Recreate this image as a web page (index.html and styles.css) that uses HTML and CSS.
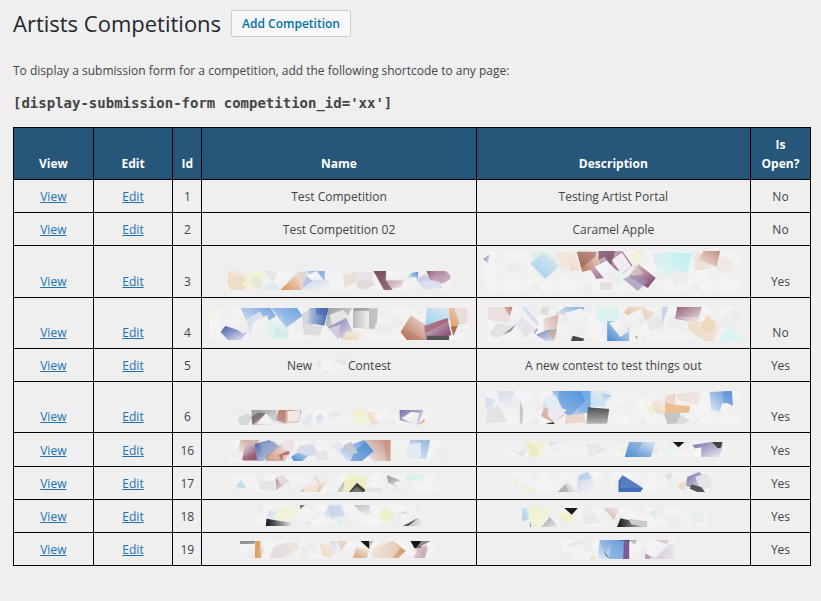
FILE: index.html
```html
<!DOCTYPE html>
<html lang="en">
<head>
<meta charset="utf-8">
<title>Artists Competitions</title>
<link rel="stylesheet" href="styles.css">
</head>
<body>
<svg class="defs" aria-hidden="true">
<defs>
<linearGradient id="blue" x1="0" y1="1" x2="1" y2="0"><stop offset="0" stop-color="#4388d0"/><stop offset="1" stop-color="#dfe7f2"/></linearGradient>
<linearGradient id="blue2" x1="1" y1="0" x2="0" y2="1"><stop offset="0" stop-color="#548fd6"/><stop offset="1" stop-color="#e6ecf5"/></linearGradient>
<linearGradient id="navy" x1="0" y1="0" x2="1" y2="1"><stop offset="0" stop-color="#405caa"/><stop offset="1" stop-color="#e6eaf2"/></linearGradient>
<linearGradient id="navy2" x1="1" y1="0" x2="0" y2="0"><stop offset="0" stop-color="#4565b0"/><stop offset="1" stop-color="#b9c6df"/></linearGradient>
<linearGradient id="sky" x1="0" y1="1" x2="1" y2="0"><stop offset="0" stop-color="#9dcff3"/><stop offset="1" stop-color="#e0ebea"/></linearGradient>
<linearGradient id="cyan" x1="1" y1="0" x2="0" y2="1"><stop offset="0" stop-color="#bdeff0"/><stop offset="1" stop-color="#e8f3f2"/></linearGradient>
<linearGradient id="plum" x1="1" y1="1" x2="0" y2="0"><stop offset="0" stop-color="#7b3862"/><stop offset="1" stop-color="#e2d8e0"/></linearGradient>
<linearGradient id="plum2" x1="0" y1="0" x2="1" y2="1"><stop offset="0" stop-color="#946079"/><stop offset="1" stop-color="#f0eaed"/></linearGradient>
<linearGradient id="rust" x1="0" y1="1" x2="1" y2="0"><stop offset="0" stop-color="#b96a4b"/><stop offset="1" stop-color="#ede2df"/></linearGradient>
<linearGradient id="rust2" x1="1" y1="0" x2="0" y2="1"><stop offset="0" stop-color="#b97560"/><stop offset="1" stop-color="#f0e9e6"/></linearGradient>
<linearGradient id="orange" x1="0" y1="1" x2="1" y2="0"><stop offset="0" stop-color="#da935c"/><stop offset="1" stop-color="#f1e6dd"/></linearGradient>
<linearGradient id="orange2" x1="1" y1="0" x2="0" y2="0"><stop offset="0" stop-color="#d29566"/><stop offset="1" stop-color="#f0e8e3"/></linearGradient>
<linearGradient id="yellow" x1="0" y1="0" x2="1" y2="1"><stop offset="0" stop-color="#f2f2c9"/><stop offset="1" stop-color="#f1f1e8"/></linearGradient>
<linearGradient id="black" x1="0" y1="0" x2="1" y2="0"><stop offset="0" stop-color="#111"/><stop offset="1" stop-color="#ddd"/></linearGradient>
<linearGradient id="dark" x1="0" y1="1" x2="0" y2="0"><stop offset="0" stop-color="#b4b5b6"/><stop offset="1" stop-color="#4c4e51"/></linearGradient>
<linearGradient id="gray" x1="0" y1="0" x2="1" y2="1"><stop offset="0" stop-color="#97999b"/><stop offset="1" stop-color="#eee"/></linearGradient>
<linearGradient id="gray2" x1="0" y1="0" x2="1" y2="0"><stop offset="0" stop-color="#b9babc"/><stop offset="1" stop-color="#efefef"/></linearGradient>
<linearGradient id="purple" x1="0" y1="0" x2="1" y2="1"><stop offset="0" stop-color="#7a6fa9"/><stop offset="1" stop-color="#edebf1"/></linearGradient>
<linearGradient id="white" x1="0" y1="0" x2="1" y2="1"><stop offset="0" stop-color="#f8f8f9"/><stop offset="1" stop-color="#e9e9ec"/></linearGradient>
<linearGradient id="lilac" x1="0" y1="0" x2="1" y2="1"><stop offset="0" stop-color="#ced8ea"/><stop offset="1" stop-color="#f1f2f5"/></linearGradient>
<linearGradient id="peach" x1="0" y1="1" x2="1" y2="0"><stop offset="0" stop-color="#eed5ba"/><stop offset="1" stop-color="#f3eeea"/></linearGradient>
<linearGradient id="fadeL"><stop offset="0" stop-color="#efefef"/><stop offset="1" stop-color="#efefef" stop-opacity="0"/></linearGradient>
<linearGradient id="fadeR"><stop offset="0" stop-color="#efefef" stop-opacity="0"/><stop offset="1" stop-color="#efefef"/></linearGradient>
<pattern id="wash" width="160" height="110" patternUnits="userSpaceOnUse">
<path fill="#f2f2f2" d="M0 0h160v110H0z"/>
<path fill="#ededee" d="M0 20 30 5 48 38 18 52zM90 60l35-10 12 30-38 8z"/>
<path fill="#f4f4f5" d="M35 0 70 12 55 50 28 35zM100 0l40 8-12 38-38-10zM10 65l40-12 20 40-42 15z"/>
<path fill="#efeff0" d="M70 25l25 8-12 30-28-10zM125 70l35-8v40l-30 4zM60 80l28-6 8 32H66z"/>
</pattern>
</defs>
</svg>

<main class="wrap">
<header class="heading">
<h1>Artists Competitions</h1>
<a class="action" href="#add">Add Competition</a>
</header>
<p class="intro">To display a submission form for a competition, add the following shortcode to any page:</p>
<pre class="shortcode">[display-submission-form competition_id='xx']</pre>

<table class="list">
<colgroup><col class="c-link"><col class="c-link"><col class="c-id"><col><col><col class="c-open"></colgroup>
<thead>
<tr><th scope="col">View</th><th scope="col">Edit</th><th scope="col">Id</th><th scope="col">Name</th><th scope="col">Description</th><th scope="col">Is Open?</th></tr>
</thead>
<tbody>
<tr><td><a href="#v1">View</a></td><td><a href="#e1">Edit</a></td><td>1</td><td>Test Competition</td><td>Testing Artist Portal</td><td>No</td></tr>
<tr><td><a href="#v2">View</a></td><td><a href="#e2">Edit</a></td><td>2</td><td>Test Competition 02</td><td>Caramel Apple</td><td>No</td></tr>
<tr><td><a href="#v3">View</a></td><td><a href="#e3">Edit</a></td><td>3</td>
<td class="pic"><svg class="art h51" viewBox="6 3 822 153"><svg x="84" y="78" width="669" height="57" viewBox="84 78 669 57">
<path fill="url(#wash)" d="M84 78h669v57H84z"/>
<path fill="url(#peach)" d="M84 78h60l-5 57H92l-8-20z"/><path fill="#efdfc8" d="M88 106 110 92l38 8-10 35H92z"/>
<path fill="url(#yellow)" d="M146 84l38-6 20 18-15 38-62-12z"/><path fill="#e5e8d8" d="M150 100l24-8 14 34-22 6z"/>
<path fill="#dfecef" d="M205 110l28 6 6 19h-52z"/><path fill="#e3e9e7" d="M190 78h38l12 22-22 12z"/>
<path fill="url(#white)" d="M236 78h56l-48 57-20-28z"/><path fill="url(#orange)" d="M292 84 242 135h65z"/>
<path fill="#dcd5d2" d="M293 80h28v16l-15 34z"/><path fill="#b8c4e0" d="M322 90 307 128l60-14z"/><path fill="url(#blue2)" opacity=".75" d="M320 78h55v28l-18 20z"/>
<path fill="url(#white)" d="M320 92l30-14 25 30-16 16z"/><path fill="url(#lilac)" d="M307 130l35-26 48 2v29h-83z"/><path fill="#f2f3f5" d="M388 78h40v57h-40z"/>
<path fill="#eee0d7" d="M430 90l34-9 16 24-45 26z"/><path fill="#e2dad6" d="M474 108l40-8 14 20-36 14-22-8z"/><path fill="#e6e4e6" d="M462 80l60 2-3 20-50 8z"/>
<path fill="url(#plum2)" d="M522 78h38l2 28h50l-5 20-52 9z"/><path fill="#6f4751" opacity=".7" d="M522 78h38l-3 26 22 31h-26z"/>
<path fill="url(#white)" d="M560 78h50l25 14-15 14h-60z"/><path fill="url(#blue2)" d="M636 84l20-4v24l-8-8-24 2z"/>
<path fill="#cbd2e6" d="M650 104l26-18 28 22-30 24z"/><path fill="#dcdfec" d="M660 112l52-8 18 24-55 7z"/><path fill="url(#plum2)" d="M753 90 735 78h-55l12 26 42 12 19-15z"/><path fill="#b48eac" opacity=".5" d="M700 78h40l13 13v12l-30 15z"/>
</svg></svg></td>
<td class="pic"><svg class="art h51" viewBox="6 3 819 153"><svg x="24" y="18" width="774" height="120" viewBox="24 18 774 120">
<path fill="url(#wash)" d="M24 18h774v120H24z"/>
<path fill="url(#purple)" d="M24 42l18-13-4 27z"/><path fill="#ecf0e7" d="M176 80l28 10 12 10-38-4z"/><path fill="#dcefe9" d="M170 22l50-3 25 30-64 8z"/>
<path fill="url(#sky)" d="M204 24l50 38-43 40-46-46z"/><path fill="#f1e6da" d="M240 22l60-2 10 28-50 22z"/><path fill="url(#peach)" d="M285 48h28l4 29h-32z"/>
<path fill="url(#rust)" d="M305 20h65l3 50-52 10z"/><path fill="#905a4c" opacity=".55" d="M305 20h60l-5 15-41 35z"/>
<path fill="url(#plum)" d="M370 18h72l30 44-38 30-70 10-18-28 27-18z"/><path fill="#724758" opacity=".7" d="M370 18h50l-12 42-20-25-18 10z"/>
<path fill="url(#white)" d="M358 65l36-18 44 42-38 28z"/><path fill="#f3ecf0" d="M410 45l30-22 30 42-32 22z"/><path fill="url(#yellow)" d="M465 28l30-10 10 28-32 14z"/>
<path fill="#e5e0dc" d="M375 112h36v22h-38z"/><path fill="#e7f0ef" d="M418 72l36 18-20 34-24-5z"/>
<path fill="url(#plum)" d="M490 57l52 42-24 30-58-34z"/><path fill="#9d91b8" opacity=".7" d="M470 90l48 18-30 30-44-36z"/><path fill="#d8cdbb" opacity=".7" d="M480 58l26 30-38 4z"/>
<path fill="#dceced" d="M533 25l70-5-6 48-54 2z"/><path fill="url(#cyan)" d="M582 22l68 3-13 65-35-15-40 26-20-34z"/>
<path fill="#eee2dc" d="M660 28l38-10 10 52-50 8z"/><path fill="url(#rust2)" opacity=".8" d="M685 18h50l-10 48-55-22z"/><path fill="#f0e8e3" d="M740 30l34 18-16 38-36-10z"/><path fill="#ececec" d="M585 90l38-8 14 25-40 20zM533 118l20 4-5 14-20-3z"/>
</svg></svg></td><td>Yes</td></tr>
<tr><td><a href="#v4">View</a></td><td><a href="#e4">Edit</a></td><td>4</td>
<td class="pic"><svg class="art h50" viewBox="6 0 822 150"><svg x="28" y="30" width="776" height="96" viewBox="28 30 776 96">
<path fill="url(#wash)" d="M28 30h776v96H28z"/><path fill="#f4f4e6" d="M28 30h22l-8 34-14 4z"/>
<path fill="url(#navy)" d="M76 84l66 20-20 22H84l-22-24z"/><path fill="url(#white)" d="M72 66l40-5 45 32-28 14z"/>
<path fill="url(#blue2)" opacity=".8" d="M122 30h90l16 25-70 44-24-42z"/><path fill="url(#lilac)" d="M140 64l40-24 28 45-58 28z"/><path fill="url(#white)" d="M160 75l42-24 10 45-64 30z"/>
<path fill="#e1f1ef" d="M206 65l62 15-5 45h-65z"/><path fill="#cdeae8" opacity=".6" d="M225 84l42 18v22l-42-4z"/><path fill="url(#blue2)" d="M214 30h78l16 24-50 35z"/><path fill="#8eb7e7" opacity=".5" d="M240 30h52l15 24-48 34z"/>
<path fill="#d5d7df" d="M306 48l26-18 20 44-40 30z"/><path fill="url(#navy2)" d="M330 30h56l-12 53-50-8z"/><path fill="#3e66ae" opacity=".6" d="M348 30h39l-3 20h-34z"/><path fill="url(#gray)" d="M386 30h72l-14 28-54 34-12-10z"/><path fill="#e4e5e6" d="M390 50l40-15 20 24-50 34z"/>
<path fill="#dddde0" d="M315 80l55 5-10 28-48-3z"/><path fill="url(#purple)" d="M385 88l54-28 22 42-32 24z"/><path fill="#d3c9dc" d="M386 90l36-10-5 46z"/><path fill="url(#peach)" d="M440 100l52 4-20 22h-46z"/>
<path fill="url(#gray2)" d="M462 30h74l-6 66-70-8z"/><path fill="#848586" opacity=".6" d="M462 30h46v12h-48z"/><path fill="#aaa" opacity=".6" d="M509 32l26-2-4 65-25-5z"/><path fill="url(#gray2)" d="M460 38h48v52h-48z"/>
<path fill="#ecebef" d="M530 75l55 10-24 25-40-8z"/><path fill="url(#rust)" d="M634 52l48 30v44h-60l-19-24z"/><path fill="#ae7562" opacity=".4" d="M610 94l65 28v4h-52z"/><path fill="url(#sky)" d="M682 30h62l14 35-80 20z"/>
<path fill="url(#plum)" d="M744 60l12 52-78 14-6-42z"/><path fill="#96404f" opacity=".5" d="M674 84l70-24 2 10-68 35z"/><path fill="url(#orange)" d="M747 30h57v42l-48 14z"/><path fill="#e9ddd5" d="M766 30h38v42l-24 6z"/><path fill="#aa6f4d" d="M754 86l22-4-14 32z"/><path fill="#555" d="M684 113h65v13h-67z"/>
</svg></svg></td>
<td class="pic"><svg class="art h50" viewBox="6 0 819 150"><svg x="37" y="27" width="761" height="102" viewBox="37 27 761 102">
<path fill="url(#wash)" d="M37 27h761v102H37z"/><path fill="#ecdfe0" d="M37 27h52l14 48-66-10z"/><path fill="url(#rust2)" d="M86 27h26l-8 32z"/><path fill="url(#white)" d="M112 30l26-3 14 45-55 15z"/><path fill="#e2e2e2" d="M65 75l52 12-54 34-20-14z"/><path fill="#909090" d="M124 78l-42 33 24-10zM189 92l-12 18 4-18z"/>
<path fill="#e6e2e9" d="M140 60l46 34-38 25-22-42z"/><path fill="#d6dfef" d="M138 27h13l41 48-7 10z"/><path fill="#dedfd8" d="M198 27h24l-4 26-22-5z"/><path fill="url(#rust2)" d="M205 62l45-12-8 76-36-32z" opacity=".5"/>
<path fill="url(#navy)" opacity=".75" d="M183 110l32-14 30-2-12 35h-22z"/><path fill="#d1aa97" opacity=".7" d="M215 98h28l-8 31z"/><path fill="url(#blue2)" opacity=".7" d="M270 27h58l-14 26-78-3z"/><path fill="url(#white)" d="M270 45l48-14 22 38-38 20zM245 80l60-10 30 42-88 17z"/><path fill="#484848" d="M293 113l35 9-4 7h-37z"/>
<path fill="#daf3f1" d="M365 27h66v39l-48 8-20-12z"/><path fill="url(#blue)" d="M396 69h44l22 25v35h-66z"/><path fill="url(#white)" d="M402 75l38-13 20 38-24 18z"/><path fill="url(#orange)" opacity=".65" d="M458 27h48l36 20-46 30-50-34z"/><path fill="url(#white)" d="M460 50l38-18 14 36-30 12z"/>
<path fill="#e8e8ec" d="M512 62l44-10 10 38-40 8z"/><path fill="#c7d4ec" d="M560 27h20l-20 55z"/><path fill="#8c8e91" d="M480 112l8 6-4 5z"/><path fill="url(#plum2)" d="M606 27h74l-14 47-66-12z"/><path fill="#eee4e7" opacity=".5" d="M605 58h70l-9 16z"/><path fill="url(#peach)" d="M637 68l50 2 10-20 42 34-26 45h-24l-48-32z"/><path fill="#efd0b2" opacity=".6" d="M692 50l28 22-6 30-40-2z"/>
<path fill="#daf4f2" d="M760 86l38 30v13h-68z"/><path fill="#ebebee" d="M760 40l22-13 16 36-24 12z"/>
</svg></svg></td><td>No</td></tr>
<tr><td><a href="#v5">View</a></td><td><a href="#e5">Edit</a></td><td>5</td>
<td>New<svg class="patch" viewBox="339 24 99 45"><path fill="#f1f1f1" d="M339 24h99v45h-99z"/><path fill="#e5e5e6" d="M400 32l38-8v22l-15-3zM366 66l10-14 8 17zM345 40l22-12-5 30z"/><path fill="#f4f4f4" d="M360 35l32-8 8 32-35 4z"/></svg>Contest</td><td>A new contest to test things out</td><td>Yes</td></tr>
<tr><td><a href="#v6">View</a></td><td><a href="#e6">Edit</a></td><td>6</td>
<td class="pic"><svg class="art h50" viewBox="6 96 822 150"><svg x="102" y="180" width="608" height="45" viewBox="102 180 608 45">
<path fill="url(#wash)" d="M102 180h608v45H102z"/><path fill="#d6d8d9" d="M112 205l30-15 16 10-14 25h-26z"/><path fill="url(#gray)" d="M155 180h74l12 30-30 15h-55z"/><path fill="#6d5a60" opacity=".7" d="M155 200l20-13 25 3-42 35z"/><path fill="url(#white)" d="M172 222l26-33 34 36z"/>
<path fill="url(#rust2)" d="M234 180h70l-6 36-64 9z"/><path fill="#a55f54" opacity=".55" d="M238 180h18l2 40-30-10z"/><path fill="#f0e9e7" d="M262 184l40-4-4 34-32 2z"/><path fill="#e4e8ec" d="M320 195l20-8-6 38h-30z"/><path fill="url(#lilac)" d="M350 198l14-8 13 20-26 15z"/><path fill="#e4e8ef" d="M385 190l22-10 18 12-30 14z"/>
<path fill="url(#yellow)" d="M458 180h40l20 12-12 33h-38z"/><path fill="url(#peach)" d="M500 184l46 4-6 36-24 1z"/><path fill="url(#white)" d="M525 195l35-12 34 42h-52z"/><path fill="url(#purple)" d="M600 180h72l-15 45-56-14z"/><path fill="url(#white)" d="M606 205l30-20 24 4-10 36z"/><path fill="#d8a176" d="M674 207l3 8-22 10z"/><path fill="url(#fadeR)" d="M660 180h50v45h-50z"/>
</svg></svg></td>
<td class="pic"><svg class="art h50" viewBox="6 6 819 150"><svg x="30" y="33" width="768" height="99" viewBox="30 33 768 99">
<path fill="url(#wash)" d="M30 33h768v99H30z"/><path fill="url(#lilac)" d="M70 33h52l-20 48-30-14zM30 50l30 10-12 36-18-10z"/><path fill="#e4e4e6" d="M36 94l32-20 28 50-66 8z"/><path fill="#c6c6ca" d="M134 60l10 32-3 39-7-2z"/><path fill="url(#white)" d="M138 60l34-26 34 48-22 18z"/><path fill="#dee3ef" d="M205 60l46 12-26 32-24-12z"/>
<path fill="url(#blue2)" d="M232 33h114v62l-62 18-42-36z"/><path fill="#4990df" opacity=".5" d="M250 33h66l16 28-48 48-34-22z"/><path fill="#7cb3ea" opacity=".7" d="M318 33h28v62h-36l20-35z"/><path fill="#e3edf4" d="M205 55l36-10 20 39-40 5z"/>
<path fill="url(#rust)" opacity=".65" d="M207 82l64 22-35 24-38-20z"/><path fill="#eceaf0" d="M222 70l52 20-34 38-22-20z"/><path fill="#ecd6cc" d="M272 106l55-5 6 26-65 5z"/><path fill="#2b201e" d="M210 131l22-4 8 5z"/>
<path fill="url(#sky)" opacity=".6" d="M346 33h68l-26 48-42-2z"/><path fill="url(#blue2)" opacity=".5" d="M378 38l32 10-28 16z"/><path fill="url(#dark)" d="M338 82l64 5-6 44h-62z"/><path fill="url(#white)" d="M402 65l36-12 26 18-42 24z"/>
<path fill="#f0efd5" d="M506 82l42-12-16 38z"/><path fill="url(#peach)" d="M530 62h40l4 44-34-8z"/><path fill="#edbd8e" d="M570 66l34 10 40 2-2 20-72 1z"/><path fill="#f0d7cb" d="M572 46l44-10-14 36-34-7z"/><path fill="url(#white)" d="M602 36h60l18 8-10 30-70-4z"/><path fill="#eee4df" d="M604 40l70-5-6 38-62-14z"/>
<path fill="#c4c5c5" d="M566 100l48-4 4 34-42 2z"/><path fill="#dcdcde" d="M616 104l30 18-20 10h-24z"/><path fill="url(#blue2)" d="M703 36l67-3 3 44-22-10-8 30-34-6z"/><path fill="#5a8fd4" opacity=".4" d="M742 33h28l3 44-20-10-6 12z"/><path fill="#f6f6f6" d="M742 68l20 8-12 24-16-8z"/>
</svg></svg></td><td>Yes</td></tr>
<tr><td><a href="#v16">View</a></td><td><a href="#e16">Edit</a></td><td>16</td>
<td class="pic"><svg class="art h33" viewBox="6 9 822 99"><svg x="84" y="30" width="651" height="63" viewBox="84 30 651 63">
<path fill="url(#wash)" d="M84 30h651v63H84z"/><path fill="url(#rust2)" opacity=".7" d="M122 30h56l-20 34-46 5z"/><path fill="#d3b6a5" d="M128 30h48l-18 18z"/><path fill="url(#plum)" d="M136 42l30 6 10 42h-50z"/><path fill="#995b60" opacity=".5" d="M128 80l46-14 5 27h-48z"/><path fill="url(#navy)" d="M164 42l44-12 32 20-50 43h-18z"/><path fill="#9fa9c9" opacity=".6" d="M180 36l40-4 22 18-52 30z"/>
<path fill="url(#rust)" d="M198 78l50-40 20 24-12 31h-58z" opacity=".65"/><path fill="#b36160" opacity=".8" d="M236 76l34-16-2 14-18 2-4 17z"/><path fill="#ece3e6" d="M252 30h34l-10 36-28-10z"/>
<path fill="url(#blue)" d="M274 80l28-18 34 6-28 25h-26z"/><path fill="#d8dcea" d="M298 48l40-6 20 30-22 8-48-14z"/><path fill="#e9e4e3" d="M348 66l34-6 4 30-40 3z"/><path fill="#e8e6ea" d="M392 48l22-18 24 26-16 14z"/><path fill="url(#blue2)" d="M432 52l62-22 29 33-36 30h-46l-22-32z"/><path fill="#3c82cc" opacity=".5" d="M468 60l30-25 25 28-36 30h-35z"/><path fill="#c6c8d3" d="M432 46l22-10 22 34-32 2z"/>
<path fill="url(#rust2)" opacity=".8" d="M495 30h78v63h-52l-15-14 17-16z"/><path fill="#cb8c77" opacity=".5" d="M550 30h23v63h-12z"/><path fill="#f0f1ed" d="M574 32h44v58h-44z"/><path fill="url(#blue2)" opacity=".6" d="M632 30h60l-12 58-60-8z"/><path fill="#e2eaf5" d="M630 42l34-4v52l-42-10z"/><path fill="url(#white)" d="M700 30h35v63h-44z"/>
</svg></svg></td>
<td class="pic"><svg class="art h33" viewBox="6 159 819 99"><svg x="64" y="186" width="690" height="45" viewBox="64 186 690 45">
<path fill="url(#wash)" d="M64 186h690v45H64z"/><path fill="#e2e4ec" d="M84 196l44 22 26-14-10 27z"/><path fill="url(#yellow)" d="M150 186h68l-25 45h-28z"/><path fill="#eeeac2" d="M155 190l30 5 6 36h-26z"/><path fill="#e7dcdc" d="M218 186h34l-28 12z"/><path fill="#eae7ea" d="M330 192l40-6 22 28-48 17z"/><path fill="#f2efd4" d="M430 207l20-6-6 25z"/>
<path fill="url(#blue)" d="M462 186h80l-15 45h-78z"/><path fill="#6396d8" opacity=".4" d="M462 186h40l-15 30-38 14z"/><path fill="#f1e8e0" d="M532 212l16-10-4 27z"/><path fill="#e2f3f1" d="M570 204l26-8 8 20-26 15z"/><path fill="#141414" d="M593 186h35l-18 16z"/><path fill="url(#purple)" d="M652 195l54-9 38 10-12 35h-54z"/><path fill="#f8f8f8" d="M658 206l20-4v29h-20z"/><path fill="#444" d="M710 186h32l-5 17-9 2z"/>
<path fill="url(#fadeL)" d="M64 186h50v45H64z"/></svg></svg></td><td>Yes</td></tr>
<tr><td><a href="#v17">View</a></td><td><a href="#e17">Edit</a></td><td>17</td>
<td class="pic"><svg class="art h32" viewBox="6 111 822 96"><svg x="84" y="135" width="680" height="51" viewBox="84 135 680 51">
<path fill="url(#wash)" d="M84 135h680v51H84z"/><path fill="url(#sky)" d="M124 148l14 26-30-4z"/><path fill="#e3e4e6" d="M180 156l44-6v34l-46-4z"/><path fill="url(#plum2)" d="M228 145l30 15-30 22z" opacity=".7"/><path fill="#e3dae0" d="M228 140l22-5 20 20-26 10z"/><path fill="url(#white)" d="M290 140l44-5 6 40-74 3z"/>
<path fill="url(#orange)" opacity=".6" d="M342 140l14-5 4 24 22-4-22 31h-60l22-18 34-5z"/><path fill="#f2e3d9" d="M320 166l40-3-10 22-40 1z"/><path fill="#eee" d="M360 135h28l-6 25-20-6z"/><path fill="url(#gray)" d="M456 152l-26 34h-18l20-30z"/><path fill="url(#yellow)" d="M440 135h54l8 36-22 15h-50z"/><path fill="#ebebb4" opacity=".6" d="M435 150l64-6 2 42h-72z"/><path fill="#42423b" d="M472 158l26 22v6h-50z"/><path fill="#8c8c70" opacity=".7" d="M472 170l20 16h-40z"/>
<path fill="#e4e4e4" d="M500 172l54 2-12 12h-48z"/><path fill="url(#gray)" d="M562 135l52 20-2 31-30-22-16-6z"/><path fill="url(#white)" d="M582 160l32-12-4 38z"/><path fill="#d6f2ef" d="M622 135h60l-26 15h-36z"/><path fill="#e6efed" d="M710 135h20l-5 18zM614 150l24 6-5 22z"/><path fill="url(#fadeL)" d="M84 135h40v51H84z"/><path fill="url(#fadeR)" d="M704 135h60v51h-60z"/>
</svg></svg></td>
<td class="pic"><svg class="art h32" viewBox="6 15 819 96"><svg x="114" y="30" width="622" height="60" viewBox="114 30 622 60">
<path fill="url(#wash)" d="M114 30h622v60H114z"/><path fill="#f0f0d6" d="M150 66l38 16-10 8h-32zM114 50l14-5-5 25z"/><path fill="url(#gray2)" d="M274 63l36 27h-62z"/><path fill="#999" opacity=".5" d="M270 68l-22 22h35z"/><path fill="url(#lilac)" d="M306 48l32-18 24 36-10 20-46 4z"/><path fill="#bed3ee" d="M310 40l28-10 10 20-36 8z"/><path fill="url(#white)" d="M348 30h40l-20 32zM358 68l36-14 10 26-40 10z"/>
<path fill="#416db8" d="M442 40l62 38-8 12h-66V57z"/><path fill="#7094cc" opacity=".45" d="M442 40l62 38h-70z"/><path fill="url(#white)" d="M454 34l46-4 3 48-52-36z"/><path fill="#e2e2e2" d="M570 38l18-8 5 15-15 10z"/><path fill="#eed9cc" d="M610 64l20-6v26l-20-4z"/><path fill="url(#purple)" d="M636 45l36-15 24 20-12 38-52-16z"/><path fill="#e4e4ec" d="M660 45l36-13 18 38-36 16z"/><path fill="#555" d="M648 67l30 8 12 15h-24l-22-10z"/><path fill="url(#fadeR)" d="M700 30h36v60h-36z"/>
</svg></svg></td><td>Yes</td></tr>
<tr><td><a href="#v18">View</a></td><td><a href="#e18">Edit</a></td><td>18</td>
<td class="pic"><svg class="art h32" viewBox="6 6 822 96"><svg x="171" y="21" width="501" height="63" viewBox="171 21 501 63">
<path fill="url(#wash)" d="M171 21h501v63H171z"/><path fill="url(#lilac)" d="M208 36l26 8-8 28-26-8z"/><path fill="url(#yellow)" d="M238 34l60-13-4 36-42 12-28-10z"/><path fill="url(#black)" d="M200 62l74 12-4 10h-72z"/><path fill="#7b7f82" d="M300 21h16l-14 13z"/><path fill="url(#white)" d="M316 28l60 15-34 24-44-12z"/><path fill="#d9ecf0" d="M318 68l20 6-15 10zM410 67l28 4-20 13z"/>
<path fill="url(#lilac)" d="M388 21h40l14 34-35 12-35-14z"/><path fill="#b3c9eb" opacity=".5" d="M384 28l34-5 18 30-42 5z"/><path fill="url(#gray)" opacity=".6" d="M512 21h-48l15 18 30 11z"/><path fill="#f0f0c7" d="M550 27l34 18-22 32-22-18z"/><path fill="#dfd5d9" d="M590 45l35-5-5 9z"/><path fill="url(#white)" d="M605 52l48-14-10 30-38 12z"/><path fill="#555" d="M656 60l-46 24h40z"/><path fill="url(#gray2)" d="M656 60l16 10v14h-46z"/>
</svg></svg></td>
<td class="pic"><svg class="art h32" viewBox="6 114 819 96"><svg x="141" y="138" width="554" height="57" viewBox="141 138 554 57">
<path fill="url(#wash)" d="M141 138h554v57H141z"/><path fill="url(#sky)" d="M141 138h20v34l-20 6z"/><path fill="#7a9eac" d="M164 176l6 19h-6z"/><path fill="url(#yellow)" d="M162 138h70l-22 36-8 21h-34z"/><path fill="#f2f2c2" d="M242 150l52 10-14 24z"/><path fill="url(#gray)" d="M224 165l26 30h-52z"/><path fill="#191917" d="M267 138h41l-18 20z"/><path fill="#e9e9ea" d="M320 160l36-12 22 34-50 4z"/><path fill="url(#rust)" opacity=".5" d="M386 138h47l-16 36z"/>
<path fill="url(#black)" d="M436 169l80 18v8h-90z"/><path fill="#c8cdd0" d="M460 170l56 8v17l-48-8z"/><path fill="#dfebec" d="M520 150l32-12-12 38zM646 152l34-8 10 34-40 3z"/><path fill="url(#fadeR)" d="M560 138h135v57H560z" opacity=".6"/>
</svg></svg></td><td>Yes</td></tr>
<tr><td><a href="#v19">View</a></td><td><a href="#e19">Edit</a></td><td>19</td>
<td class="pic"><svg class="art h32" viewBox="6 105 822 96"><svg x="120" y="129" width="615" height="51" viewBox="120 129 615 51">
<path fill="url(#wash)" d="M120 129h615v51H120z"/><path fill="#8b9291" d="M120 129h46l-2 8-44 1z"/><path fill="url(#white)" d="M120 146l45-8v42h-45z"/><path fill="#dda160" d="M166 129h15l2 51h-18z"/><path fill="url(#orange)" opacity=".6" d="M178 145l16 8-12 27h-10z"/><path fill="#e4dede" d="M220 148l40-15 22 26-36 21h-38z"/><path fill="#eee3de" d="M262 136l30-7 6 28-28 3z"/><path fill="#e7eff0" d="M302 148l26-10v42h-28z"/>
<path fill="url(#peach)" d="M358 135l30 4 24 25-22 16-22-8z"/><path fill="url(#lilac)" d="M390 129h20l6 38-14-5z"/><path fill="#e8d6cc" d="M410 129h35l-20 30z"/><path fill="url(#white)" d="M440 150l22-18 40 28-30 20h-42z"/><path fill="url(#orange)" opacity=".8" d="M470 150l40 6-8 24h-42z"/><path fill="#191715" d="M483 129h26v24z"/><path fill="#b8aea6" d="M509 129h12l-12 20z"/><path fill="url(#orange2)" d="M580 129l39 30-23 21h-84l8-26z"/><path fill="#efe3dc" d="M540 129h38l24 20-24 31h-46l-12-24z" opacity=".6"/>
<path fill="url(#plum)" opacity=".45" d="M660 142l26 6-10 32h-34z"/><path fill="#151515" d="M633 129h34l-4 20-18 2z"/><path fill="#878787" d="M666 129h28l-46 23z"/><path fill="#d9a0a0" opacity=".5" d="M642 154l40-16-6 34z"/><path fill="#f4f4f4" d="M690 140l20 8-14 20z"/><path fill="url(#fadeR)" d="M685 129h50v51h-50z"/>
</svg></svg></td>
<td class="pic"><svg class="art h32" viewBox="6 213 819 96"><svg x="261" y="234" width="339" height="57" viewBox="261 234 339 57">
<path fill="url(#wash)" d="M261 234h339v57H261z"/><path fill="#e8e8e9" d="M275 246l40-12 14 10-44 14z"/><path fill="url(#peach)" d="M354 276l12 15h-22z"/><path fill="url(#blue2)" d="M374 234h78l-4 57h-82z"/><path fill="#72a8df" opacity=".6" d="M410 240l38-4v55h-46z"/><path fill="#7fa9dc" opacity=".35" d="M374 240l36-6-20 40z"/><path fill="#777a89" d="M386 268l18 20-12-6z"/><path fill="#7f579a" d="M446 240l16-6v57h-18z"/><path fill="#574a67" d="M428 234h36v5z"/>
<path fill="#bbb" d="M462 234h24l-8 14z"/><path fill="url(#white)" d="M466 250l38-12 8 50-46 3z"/><path fill="#c096c0" d="M510 274l30 17h-30z"/><path fill="#dfd3e1" d="M556 244l44 6v41h-78z"/><path fill="url(#white)" d="M536 248l45-10-3 14-38 36-22-12z"/><path fill="#ddc3d3" d="M540 234h42l-6 12z"/><path fill="url(#fadeR)" d="M560 234h40v57h-40z" opacity=".7"/>
</svg></svg></td><td>Yes</td></tr>
</tbody>
</table>
</main>
</body>
</html>
```
FILE: styles.css
```css
* { box-sizing: border-box; }

body {
  margin: 0;
  background: #efefef;
  color: #444;
  font: 12px/19px "Open Sans", "Noto Sans", sans-serif;
}

.defs { position: absolute; width: 0; height: 0; }

.wrap { padding: 10px 10px 32px 13px; }

.heading { display: flex; align-items: center; gap: 10px; }

h1 {
  margin: 0;
  color: #23282d;
  font-size: 22px;
  font-weight: 400;
  line-height: 27px;
}

.action {
  padding: 4px 10px;
  border: 1px solid #ccc;
  border-radius: 2px;
  background: #f7f7f7;
  color: #0073aa;
  font-weight: 600;
  line-height: 17px;
  text-decoration: none;
}

.intro { margin: 24px 0 13px; }

.shortcode {
  margin: 0 0 14px;
  font: bold 14px/20px "DejaVu Sans Mono", monospace;
}

.list {
  width: 100%;
  table-layout: fixed;
  border-collapse: collapse;
  text-align: center;
}

.c-link { width: 10%; }
.c-id { width: 29px; }
.c-open { width: 60px; }

.list th,
.list td {
  padding: 7px 6px 6px;
  border: 1px solid #000;
  vertical-align: bottom;
}

.list th {
  padding: 7px 8px 6px;
  background: #26567a;
  color: #fff;
  font-weight: 700;
}

.list a { color: #2271b1; }

.list .pic { padding: 0; }

.art { display: block; width: 100%; }
.h51 { height: 51px; }
.h50 { height: 50px; }
.h33 { height: 33px; }
.h32 { height: 32px; }

.patch {
  width: 33px;
  height: 15px;
  margin: 0 2px 0 1px;
  vertical-align: -3px;
}
```
